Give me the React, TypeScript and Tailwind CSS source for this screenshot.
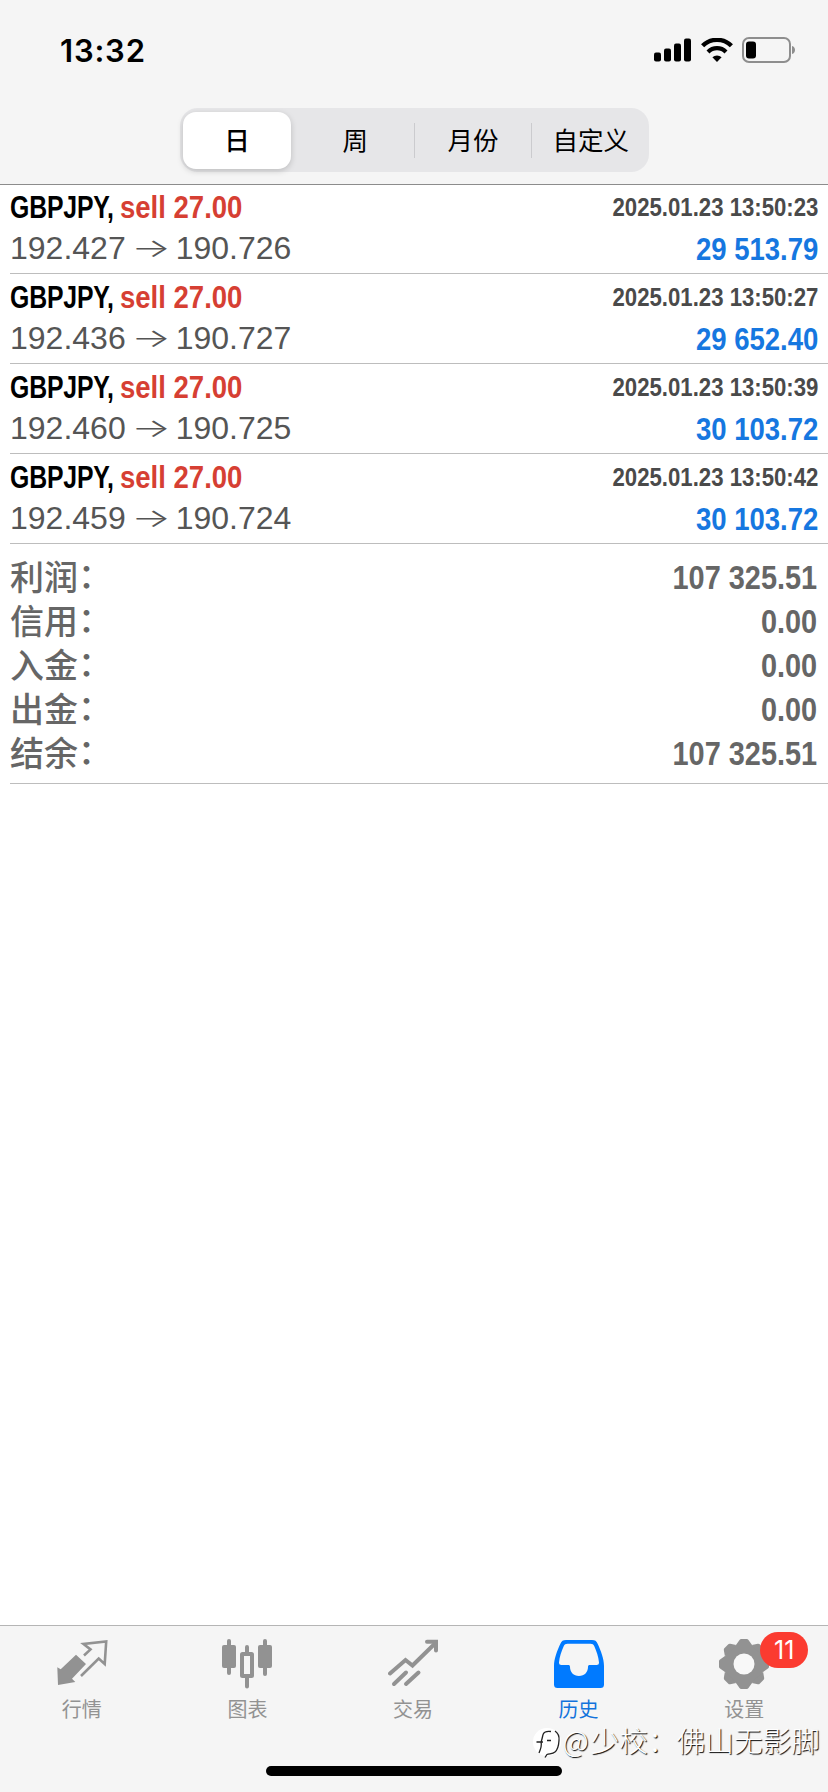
import React from 'react';
import clsx from 'clsx';

interface Deal {
  id: number;
  symbol: string;
  side: string;
  open: string;
  close: string;
  time: string;
  profit: string;
}

const deals: Deal[] = [
  { id: 1, symbol: 'GBPJPY,', side: 'sell 27.00', open: '192.427', close: '190.726', time: '2025.01.23 13:50:23', profit: '29 513.79' },
  { id: 2, symbol: 'GBPJPY,', side: 'sell 27.00', open: '192.436', close: '190.727', time: '2025.01.23 13:50:27', profit: '29 652.40' },
  { id: 3, symbol: 'GBPJPY,', side: 'sell 27.00', open: '192.460', close: '190.725', time: '2025.01.23 13:50:39', profit: '30 103.72' },
  { id: 4, symbol: 'GBPJPY,', side: 'sell 27.00', open: '192.459', close: '190.724', time: '2025.01.23 13:50:42', profit: '30 103.72' },
];

const summary = [
  { label: '利润', value: '107 325.51' },
  { label: '信用', value: '0.00' },
  { label: '入金', value: '0.00' },
  { label: '出金', value: '0.00' },
  { label: '结余', value: '107 325.51' },
];

const periods = ['日', '周', '月份', '自定义'];

const StatusBar = () => (
  <div className="flex h-[100px] items-center justify-between pl-[60px] pr-[32px]">
    <span className="font-['Inter'] text-[31px] font-semibold leading-none tracking-[0.8px]">13:32</span>
    <div className="flex items-center">
      <svg width="38" height="24" viewBox="0 0 38 24">
        <rect x="0" y="14.5" width="7" height="9" rx="2" />
        <rect x="10" y="10.5" width="7" height="13" rx="2" />
        <rect x="20" y="5.5" width="7" height="18" rx="2" />
        <rect x="30" y="0.5" width="7" height="23" rx="2" />
      </svg>
      <svg className="ml-[9px]" width="32" height="24" viewBox="0 0 32 24">
        <path d="M1.6 7.8a20.4 20.4 0 0 1 28.8 0" fill="none" stroke="#000" strokeWidth="4.4" />
        <path d="M7 13.9a12.7 12.7 0 0 1 18 0" fill="none" stroke="#000" strokeWidth="4.2" />
        <path d="M16 24l-4.6-4.7a6.5 6.5 0 0 1 9.2 0z" />
      </svg>
      <svg className="ml-[9px]" width="54" height="26" viewBox="0 0 54 26">
        <rect x="1" y="1" width="47" height="24" rx="6" fill="none" stroke="#8e8e8e" strokeWidth="2" />
        <rect x="4" y="4.5" width="10" height="17" rx="3" />
        <path d="M50 9c4 1 4 7 0 8z" fill="#8e8e8e" />
      </svg>
    </div>
  </div>
);

const QuotesIcon = () => (
  <svg width="52" height="50" viewBox="0 0 52 50">
    <path d="M1.300 28.300l3.400 2L20 15.700l10 9.300-14 14.700 3.300 3.300L2 45.900z" fill="#929292" />
    <path d="M25 37l17.700-17.500 6 5.500 1.500-22.500L27.500 5l7 5.400-6.500 6.100" fill="none" stroke="#929292" strokeWidth="2.600" />
  </svg>
);

const ChartIcon = () => (
  <svg width="50" height="50" viewBox="0 0 50 50" fill="#929292">
    <rect x="5" y="0" width="4" height="36" rx="2" />
    <rect x="0" y="6" width="14" height="23" rx="2" />
    <rect x="41" y="0" width="4" height="37" rx="2" />
    <rect x="36" y="6" width="14" height="23" rx="2" />
    <path d="M23 8a2 2 0 0 1 4 0v6h-4zM23 38h4v9.500a2 2 0 0 1-4 0z" />
    <rect x="20" y="15" width="10" height="22" rx="0.500" fill="none" stroke="#929292" strokeWidth="4" />
  </svg>
);

const TradeIcon = () => (
  <svg width="50" height="50" viewBox="0 0 50 50" fill="none" stroke="#929292" strokeWidth="4" strokeLinecap="round">
    <path d="M2 34.500L17.500 21l7 5.500L47.500 4" strokeLinejoin="miter" />
    <path d="M39 2.800h9v8.700" />
    <path d="M6 45l12-11.500M18 45l12.500-11.500" />
  </svg>
);

const HistoryIcon = () => (
  <svg width="50" height="50" viewBox="0 0 50 50">
    <path
      d="M12 1h26c3 0 4.500 1 5.500 3.500C47 12 50 20 50 27v18.500a3.500 3.500 0 0 1-3.500 3.500h-43A3.500 3.500 0 0 1 0 45.500V27C0 20 3 12 6.500 4.500 7.500 2 9 1 12 1zM13.500 4.800c-2 0-3 .7-3.700 2.200C7.500 12 5.500 18 5 23.500c0 1.700.8 2.500 2.500 2.500H14c1.500 0 2 .6 2 2 0 5 3.500 9 9 9s9-4 9-9c0-1.400.5-2 2-2h6.500c1.700 0 2.500-.8 2.500-2.500C44.500 18 42.500 12 40.200 7c-.7-1.500-1.700-2.200-3.700-2.200z"
      fill="#007aff"
      fillRule="evenodd"
    />
  </svg>
);

const SettingsIcon = () => (
  <svg width="50" height="50" viewBox="-25 -25 50 50">
    <circle r="20.500" fill="#929292" />
    {[0, 45, 90, 135, 180, 225, 270, 315].map((deg) => (
      <path key={deg} d="M-8-19l3.500-5q.7-1 1.700-1h5.600q1 0 1.700 1l3.500 5z" fill="#929292" transform={`rotate(${deg})`} />
    ))}
    <circle r="10.500" fill="#f8f8f8" />
  </svg>
);

const tabs = [
  { label: '行情', icon: <QuotesIcon /> },
  { label: '图表', icon: <ChartIcon /> },
  { label: '交易', icon: <TradeIcon /> },
  { label: '历史', icon: <HistoryIcon />, active: true },
  { label: '设置', icon: <SettingsIcon />, badge: 11 },
];

const DealRow = ({ deal }: { deal: Deal }) => (
  <div className="ml-[10px] h-[90px] border-b border-[#bdbdbd] pr-[10px]">
    <div className="flex h-[46px] items-center justify-between whitespace-nowrap font-bold">
      <div className="flex text-[32px] leading-none">
        <span className="w-[110px]">
          <span className="inline-block origin-left scale-x-[0.775] tracking-[-0.2px] text-black">{deal.symbol}</span>
        </span>
        <span className="inline-block origin-left scale-x-[0.86] text-[#d63f33]">{deal.side}</span>
      </div>
      <span className="inline-block origin-right scale-x-[0.853] text-[26px] leading-none text-[#4a4a4a]">{deal.time}</span>
    </div>
    <div className="flex h-[38px] items-center justify-between whitespace-nowrap leading-none">
      <div className="flex items-center pb-[2px] text-[32px] text-[#555]">
        <span>{deal.open}</span>
        <span className="w-[50px] scale-x-[1.6] text-center font-['Inter'] text-[26px] font-light">→</span>
        <span>{deal.close}</span>
      </div>
      <span className="inline-block origin-right scale-x-[0.86] text-[32px] font-bold text-[#1677e0]">{deal.profit}</span>
    </div>
  </div>
);

export default function App() {
  return (
    <div className="flex h-[1792px] w-[828px] flex-col overflow-hidden bg-white font-['Liberation_Sans','Noto_Sans_CJK_SC',sans-serif] text-black">
      <header className="h-[185px] border-b border-[#8c8c8c] bg-[#f5f5f5]">
        <StatusBar />
        <div className="ml-[180px] mt-[8px] flex h-[64px] w-[469px] items-center rounded-[18px] bg-[#e6e6e8] pl-[3px]">
          {periods.map((period, i) => (
            <React.Fragment key={period}>
              {i > 1 && <div className="h-[35px] w-[1px] bg-[#cbcbce]" />}
              <div
                className={clsx(
                  "flex items-center justify-center pb-[2px] font-['Noto_Sans_CJK_SC',sans-serif] text-[25.500px] leading-none",
                  i === 0
                    ? 'mr-[6px] h-[57px] w-[108px] rounded-[13px] bg-white font-medium shadow-[0_2px_6px_rgba(0,0,0,0.18)]'
                    : 'flex-1',
                )}
              >
                {period}
              </div>
            </React.Fragment>
          ))}
        </div>
      </header>

      <main className="-mt-px flex-1">
        {deals.map((deal) => (
          <DealRow key={deal.id} deal={deal} />
        ))}

        <div className="ml-[10px] border-b border-[#bdbdbd] pb-[9px] pr-[11px] pt-[10px]">
          {summary.map((row) => (
            <div key={row.label} className="flex h-[44px] items-center justify-between whitespace-nowrap text-[#666]">
              <span className="flex font-['Noto_Sans_CJK_SC',sans-serif] text-[34px] font-medium leading-none">
                {row.label}
                <span className="-translate-y-[2px]">：</span>
              </span>
              <span className="inline-block origin-right scale-x-[0.85] pt-[2px] text-[34px] font-bold leading-none">{row.value}</span>
            </div>
          ))}
        </div>
      </main>

      <footer className="relative h-[167px] border-t border-[#b5b5b5] bg-[#f5f5f5]">
        <nav className="-ml-[1px] mr-[1px] grid grid-cols-5 pt-[13px]">
          {tabs.map((tab) => (
            <div
              key={tab.label}
              className={clsx('flex flex-col items-center gap-[10px]', tab.active ? 'text-[#1273dc]' : 'text-[#929292]')}
            >
              <div className="relative">
                {tab.icon}
                {tab.badge && (
                  <span className="absolute left-[41px] top-[-7px] flex h-[36px] w-[48px] items-center justify-center rounded-full bg-[#fb3b30] font-['Inter'] text-[25px] leading-none text-white">
                    {tab.badge}
                  </span>
                )}
              </div>
              <span className="font-['Noto_Sans_CJK_SC',sans-serif] text-[20px] leading-none">{tab.label}</span>
            </div>
          ))}
        </nav>

        {/* home indicator */}
        <div className="absolute left-[266px] top-[140px] h-[10px] w-[296px] rounded-full bg-black" />

        <div className="absolute right-[8px] top-[95px] flex items-center whitespace-nowrap text-white">
          <svg width="34" height="34" viewBox="0 0 34 34" fill="none" className="-mr-[1px] mt-[5px]">
            <circle cx="18" cy="16" r="14" fill="#fff" />
            <path
              d="M22 5.500c-4-.5-6.500 0-7.500 2-1.200 2.500-1 5-2.500 8.500 1 3-.5 7.500-2 11M7.500 16H14M18 14.500h4M26 5c3 2 4.500 5 4 9.500-.3 5-1 9-4 11.500-2.500 2-6 1.500-8 2.500l-2 3"
              stroke="#222"
              strokeWidth="1.300"
            />
          </svg>
          <span className="font-['Noto_Sans_CJK_SC',sans-serif] text-[28.700px] font-light leading-none [text-shadow:1px_1px_1px_#000]">
            <span className="mr-[2px]">@</span>少校：佛山无影脚
          </span>
        </div>
      </footer>
    </div>
  );
}
